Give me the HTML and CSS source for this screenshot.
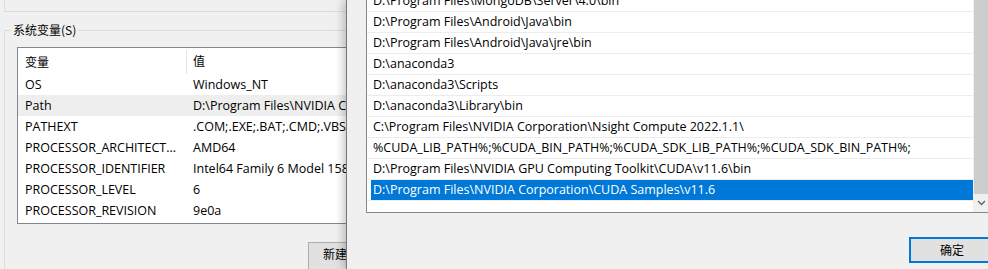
FILE: index.html
```html
<!DOCTYPE html>
<html lang="zh-CN">
<head>
    <meta charset="UTF-8">
    <title>环境变量</title>
    <link rel="stylesheet" href="styles.css">
</head>
<body>
    <div class="main-win">
        <div class="prev-group"></div>

        <fieldset class="group">
            <legend>系统变量(S)</legend>
            <div class="var-list">
                <div class="var-head">
                    <div class="col-name">变量</div>
                    <div class="col-value">值</div>
                </div>
                <div class="var-row"><div class="col-name">OS</div><div class="col-value">Windows_NT</div></div>
                <div class="var-row hover"><div class="col-name">Path</div><div class="col-value">D:\Program Files\NVIDIA C</div></div>
                <div class="var-row"><div class="col-name">PATHEXT</div><div class="col-value">.COM;.EXE;.BAT;.CMD;.VBS</div></div>
                <div class="var-row"><div class="col-name">PROCESSOR_ARCHITECT...</div><div class="col-value">AMD64</div></div>
                <div class="var-row"><div class="col-name">PROCESSOR_IDENTIFIER</div><div class="col-value">Intel64 Family 6 Model 158</div></div>
                <div class="var-row"><div class="col-name">PROCESSOR_LEVEL</div><div class="col-value">6</div></div>
                <div class="var-row"><div class="col-name">PROCESSOR_REVISION</div><div class="col-value">9e0a</div></div>
            </div>
            <div class="group-actions">
                <button class="win-btn">新建</button>
            </div>
        </fieldset>
    </div>

    <div class="edit-win">
        <div class="path-list">
            <div class="paths">
                <div class="path-row"><span class="path-item">D:\Program Files\MongoDB\Server\4.0\bin</span></div>
                <div class="path-row"><span class="path-item">D:\Program Files\Android\Java\bin</span></div>
                <div class="path-row"><span class="path-item">D:\Program Files\Android\Java\jre\bin</span></div>
                <div class="path-row"><span class="path-item">D:\anaconda3</span></div>
                <div class="path-row"><span class="path-item">D:\anaconda3\Scripts</span></div>
                <div class="path-row"><span class="path-item">D:\anaconda3\Library\bin</span></div>
                <div class="path-row"><span class="path-item">C:\Program Files\NVIDIA Corporation\Nsight Compute 2022.1.1\</span></div>
                <div class="path-row"><span class="path-item">%CUDA_LIB_PATH%;%CUDA_BIN_PATH%;%CUDA_SDK_LIB_PATH%;%CUDA_SDK_BIN_PATH%;</span></div>
                <div class="path-row"><span class="path-item">D:\Program Files\NVIDIA GPU Computing Toolkit\CUDA\v11.6\bin</span></div>
                <div class="path-row"><span class="path-item selected">D:\Program Files\NVIDIA Corporation\CUDA Samples\v11.6</span></div>
            </div>
            <div class="scrollbar">
                <div class="thumb"></div>
                <div class="arrow">
                    <svg width="9" height="6" viewBox="0 0 9 6"><path d="M1 1 L4.5 4.5 L8 1" fill="none" stroke="#606060" stroke-width="1.3"/></svg>
                </div>
            </div>
        </div>
        <div class="edit-actions">
            <button class="win-btn default">确定</button>
        </div>
    </div>
</body>
</html>
```

FILE: styles.css
```css
body {
    margin: 0;
    width: 988px;
    height: 269px;
    overflow: hidden;
    display: flex;
    background: #f0f0f0;
    color: #000;
    font-family: 'Open Sans', 'Noto Sans CJK SC', sans-serif;
    font-size: 12.5px;
}
.main-win {
    width: 346px;
    flex: none;
    overflow: hidden;
}
.prev-group {
    margin-left: 4px;
    height: 11px;
    border-left: 1px solid #dcdcdc;
    border-bottom: 1px solid #dcdcdc;
}
.group {
    margin: 10px 0 0 4px;
    padding: 0 0 0 6px;
    height: 260px;
    border: 1px solid #dcdcdc;
    border-right: none;
    border-bottom: none;
    min-width: 0;
}
.group legend {
    padding: 0 2px;
    font-family: 'Noto Sans CJK SC', sans-serif;
    font-size: 12px;
    line-height: 16px;
}
.var-list {
    margin: 9px 0 0 6px;
    width: 330px;
    padding-bottom: 2px;
    background: #fff;
    border: 1px solid #828790;
}
.var-head,
.var-row {
    display: grid;
    grid-template-columns: 169px 1fr;
    white-space: nowrap;
}
.var-head {
    height: 26px;
    line-height: 26px;
    font-family: 'Noto Sans CJK SC', sans-serif;
    font-size: 12px;
}
.var-head .col-name {
    border-right: 1px solid #e5e5e5;
    margin-top: 2px;
    line-height: 24px;
}
.var-row {
    height: 21px;
    line-height: 21px;
}
.var-row.hover {
    background: #eeeeee;
}
.col-name {
    padding-left: 7px;
    overflow: hidden;
}
.col-value {
    padding-left: 6px;
    overflow: hidden;
}
.group-actions {
    margin-top: 18px;
    padding-left: 297px;
}
.win-btn {
    height: 30px;
    width: 80px;
    padding: 3px 0 0 14px;
    background: #e1e1e1;
    border: 1px solid #adadad;
    font-family: 'Noto Sans CJK SC', sans-serif;
    font-size: 12px;
    line-height: 16px;
    color: #000;
    display: flex;
    align-items: flex-start;
    white-space: nowrap;
}
.win-btn.default {
    width: 86px;
    height: 26px;
    padding: 0;
    justify-content: center;
    align-items: center;
    border: 2px solid #0078d7;
}
.edit-win {
    flex: 1;
    position: relative;
    overflow: hidden;
    padding-left: 19px;
    border-left: 1px solid #787878;
    box-shadow: -3px 0 8px rgba(0, 0, 0, 0.22);
}
.path-list {
    margin-top: -10px;
    width: 623px;
    display: flex;
    background: #fff;
    border: 1px solid #828790;
}
.paths {
    flex: 1;
    padding-bottom: 11px;
}
.path-row {
    height: 20px;
    border-bottom: 1px solid #ececec;
    white-space: nowrap;
}
.path-item {
    display: block;
    margin-left: 4px;
    padding-left: 2px;
    line-height: 20px;
}
.path-item.selected {
    background: #0078d7;
    color: #fff;
}
.scrollbar {
    width: 17px;
    display: flex;
    flex-direction: column;
    background: #f0f0f0;
}
.thumb {
    flex: 1;
    margin: 0 1px;
    background: #cdcdcd;
}
.arrow {
    height: 18px;
    display: flex;
    align-items: center;
    justify-content: center;
}
.edit-actions {
    margin-top: 24px;
    padding-left: 543px;
}
```
